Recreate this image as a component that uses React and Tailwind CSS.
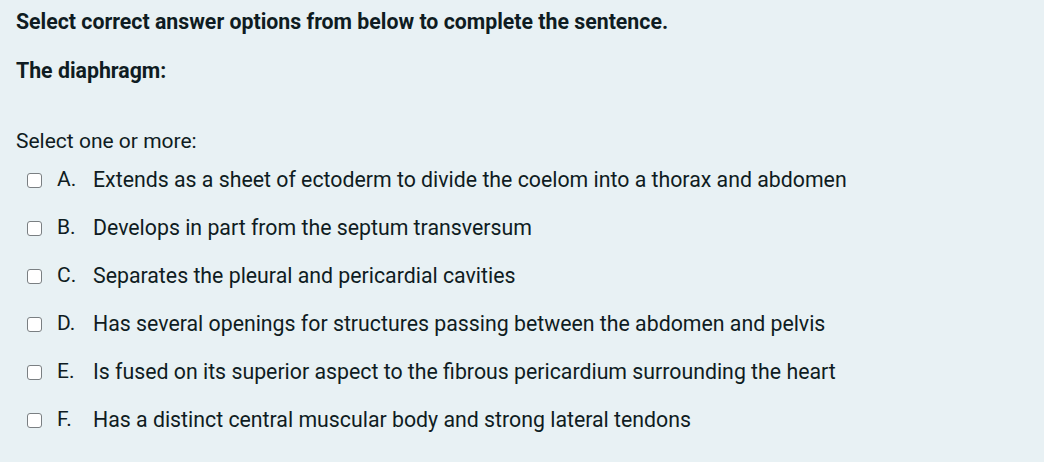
const OPTIONS = [
  { id: "A", text: "Extends as a sheet of ectoderm to divide the coelom into a thorax and abdomen" },
  { id: "B", text: "Develops in part from the septum transversum" },
  { id: "C", text: "Separates the pleural and pericardial cavities" },
  { id: "D", text: "Has several openings for structures passing between the abdomen and pelvis" },
  { id: "E", text: "Is fused on its superior aspect to the fibrous pericardium surrounding the heart" },
  { id: "F", text: "Has a distinct central muscular body and strong lateral tendons" },
];

export default function App() {
  return (
    <div
      className="w-[1044px] h-[462px] bg-[#e8f1f4] text-[#0f1c22] px-4 overflow-hidden"
      style={{ fontFamily: "Roboto, 'Liberation Sans', sans-serif" }}
    >
      <p className="pt-[11px] text-[21.3px] leading-[22px] font-bold">
        Select correct answer options from below to complete the sentence.
      </p>
      <p className="mt-[27px] text-[21.3px] leading-[22px] font-bold">The diaphragm:</p>

      <p className="mt-[48px] text-[21px] leading-[22px]">Select one or more:</p>

      <ul className="mt-[4px]">
        {OPTIONS.map((o) => (
          <li key={o.id} className="flex items-center h-[48px] pl-[11px]">
            <input
              type="checkbox"
              className="appearance-none w-[15px] h-[15px] rounded-[3px] border border-[#7a7f82] bg-white shrink-0"
            />
            <span className="ml-[15px] w-[36px] text-[21px]">{o.id}.</span>
            <span className="text-[21.3px]">{o.text}</span>
          </li>
        ))}
      </ul>
    </div>
  );
}
